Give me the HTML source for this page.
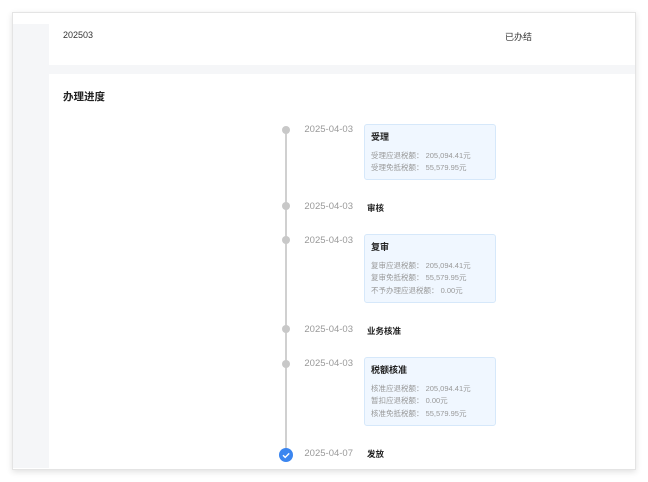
<!DOCTYPE html><html><head><meta charset="utf-8"><style>
body{margin:0;width:648px;height:482px;background:#fff;position:relative;overflow:hidden;font-family:"Liberation Sans","Noto Sans CJK SC",sans-serif;}
.a{position:absolute}
.card{position:absolute;left:364px;width:130px;background:#f0f7ff;border:1px solid #d6e8fa;border-radius:3px;}
.card b{position:absolute;left:6px;top:5px;font-size:9px;color:#222}
.card div{position:absolute;left:6px;font-size:7.5px;color:#999;white-space:nowrap}
.dot{position:absolute;left:282px;width:8px;height:8px;border-radius:50%;background:#c8c8c8}
.dt{position:absolute;left:296px;width:57px;text-align:right;font-size:9.5px;color:#999}
.lb{position:absolute;left:367px;font-size:8.5px;font-weight:bold;color:#222}
</style></head><body>
<div class="a" style="left:12px;top:12px;width:622px;height:456px;border:1px solid #e4e4e4;box-shadow:0 2px 6px rgba(0,0,0,.12);background:#fff"></div>
<div class="a" style="left:13px;top:24px;width:36px;height:444px;background:#f5f6f8"></div>
<div class="a" style="left:13px;top:65px;width:622px;height:9px;background:#f5f6f8"></div>
<div class="a" style="left:63px;top:30px;font-size:9px;color:#333">202503</div>
<div class="a" style="left:505px;top:30px;font-size:9px;color:#333">已办结</div>
<div class="a" style="left:63px;top:89px;font-size:10.5px;font-weight:bold;color:#222">办理进度</div>
<div class="a" style="left:285px;top:132px;width:2px;height:318px;background:#d0d0d0"></div>
<div class="dot" style="top:126px"></div><div class="dot" style="top:202px"></div><div class="dot" style="top:236px"></div><div class="dot" style="top:325px"></div><div class="dot" style="top:360px"></div>
<div class="a" style="left:279px;top:448px;width:14px;height:14px;border-radius:50%;background:#3b86f0"><svg width="14" height="14"><path d="M4 7.2l2.2 2.2 4-4" stroke="#fff" stroke-width="1.4" fill="none"/></svg></div>
<div class="dt" style="top:124px">2025-04-03</div><div class="dt" style="top:201px">2025-04-03</div><div class="dt" style="top:235px">2025-04-03</div><div class="dt" style="top:324px">2025-04-03</div><div class="dt" style="top:358px">2025-04-03</div><div class="dt" style="top:448px">2025-04-07</div>
<div class="card" style="top:124px;height:54px"><b>受理</b><div style="top:25px">受理应退税额： 205,094.41元</div><div style="top:37px">受理免抵税额： 55,579.95元</div></div>
<div class="lb" style="top:202px">审核</div>
<div class="card" style="top:234px;height:67px"><b>复审</b><div style="top:25px">复审应退税额： 205,094.41元</div><div style="top:37px">复审免抵税额： 55,579.95元</div><div style="top:50px">不予办理应退税额： 0.00元</div></div>
<div class="lb" style="top:325px">业务核准</div>
<div class="card" style="top:357px;height:67px"><b>税额核准</b><div style="top:25px">核准应退税额： 205,094.41元</div><div style="top:37px">暂扣应退税额： 0.00元</div><div style="top:50px">核准免抵税额： 55,579.95元</div></div>
<div class="lb" style="top:448px">发放</div>
</body></html>
